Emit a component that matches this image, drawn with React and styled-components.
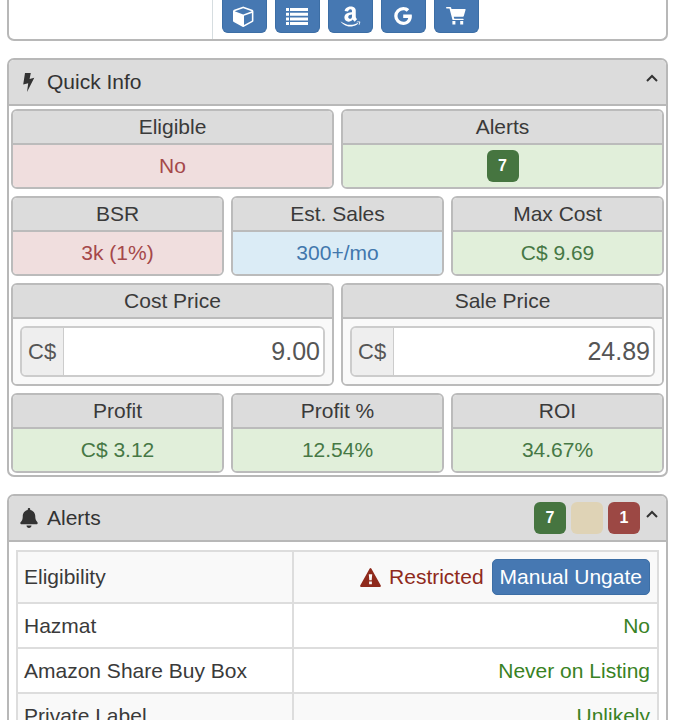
import { useState } from "react";
import styled, { createGlobalStyle, css } from "styled-components";
import { FaAmazon, FaBell } from "react-icons/fa";

const GlobalStyle = createGlobalStyle`
  *,
  *::before,
  *::after {
    box-sizing: border-box;
  }
  body {
    margin: 0;
    background: #fff;
    color: #3a3a3a;
    font-family: "Liberation Sans", Arial, sans-serif;
    font-size: 21px;
    line-height: 24px;
  }
  button,
  input {
    font: inherit;
  }
`;

const tones = {
  danger: { background: "#f0dede", color: "#a5484a" },
  success: { background: "#e1efda", color: "#467845" },
  info: { background: "#dbecf6", color: "#4177ad" },
};

const Page = styled.main`
  display: flex;
  flex-direction: column;
  gap: 17px;
  padding: 0 7px 17px;
`;

const ProductPanel = styled.section`
  display: flex;
  border: 2px solid #b8b8b8;
  border-top: 0;
  border-radius: 0 0 7px 7px;
`;

const ProductThumb = styled.div`
  flex: 0 0 31%;
  border-right: 1px solid #d6dde0;
`;

const ProductLinks = styled.nav`
  display: flex;
  gap: 8px;
  padding: 0 9px 6px;
`;

const IconLink = styled.a`
  display: flex;
  align-items: center;
  justify-content: center;
  width: 45px;
  height: 33px;
  border: 1px solid #3c6ea5;
  border-top: 0;
  border-radius: 0 0 6px 6px;
  background: #4678b2;
  color: #fff;
`;

const Panel = styled.section`
  overflow: hidden;
  border: 2px solid #b8b8b8;
  border-radius: 7px;
`;

const PanelHeader = styled.header`
  display: flex;
  align-items: center;
  height: 46px;
  padding: 0 8px 0 10px;
  border-bottom: 2px solid #b8b8b8;
  background: #dcdcdc;
  color: #333;
`;

const PanelIcon = styled.span`
  display: flex;
  flex: 0 0 28px;
`;

const PanelTitle = styled.h2`
  flex: 1;
  margin: 0;
  font-size: 21px;
  font-weight: 400;
`;

const Toggle = styled.button`
  display: flex;
  margin: 0 0 8px 6px;
  padding: 0;
  border: 0;
  background: none;
  color: #333;
  cursor: pointer;
`;

const Badges = styled.div`
  display: flex;
  gap: 5px;
`;

const Badge = styled.span`
  display: flex;
  align-items: center;
  justify-content: center;
  width: 32px;
  height: 32px;
  border-radius: 6px;
  background: ${({ $color }) => $color};
  color: #fff;
  font-size: 16px;
  font-weight: 700;
`;

const Tiles = styled.div`
  display: grid;
  grid-template-columns: repeat(6, 1fr);
  gap: 7px;
  padding: 3px 2px 2px;
`;

const TileBox = styled.div`
  grid-column: span ${({ $span }) => $span};
  overflow: hidden;
  border: 2px solid #bbb;
  border-radius: 6px;
  text-align: center;
`;

const TileTitle = styled.h3`
  margin: 0;
  padding: 4px 0;
  border-bottom: 2px solid #bbb;
  background: #dcdcdc;
  color: #3a3a3a;
  font-size: 21px;
  font-weight: 400;
`;

const TileBody = styled.div`
  display: flex;
  align-items: center;
  justify-content: center;
  height: 42px;
  ${({ $tone }) => css`
    background: ${tones[$tone].background};
    color: ${tones[$tone].color};
  `}
`;

const PriceBody = styled.div`
  padding: 7px;
  background: #f9f9f9;
`;

const PriceGroup = styled.label`
  display: flex;
  height: 51px;
  overflow: hidden;
  border: 2px solid #ccc;
  border-radius: 6px;
`;

const Currency = styled.span`
  display: flex;
  align-items: center;
  padding: 0 7px 0 6px;
  border-right: 1px solid #ccc;
  background: #eee;
  color: #555;
  font-size: 22px;
`;

const PriceInput = styled.input`
  flex: 1;
  min-width: 0;
  padding: 0 3px;
  border: 0;
  outline: 0;
  background: #fff;
  color: #555;
  font-size: 25px;
  text-align: right;
`;

const TableWrap = styled.div`
  padding: 8px 7px;
`;

const Table = styled.table`
  width: 100%;
  border-collapse: collapse;
`;

const Row = styled.tr`
  background: ${({ $shaded }) => ($shaded ? "#f9f9f9" : "#fff")};
`;

const Label = styled.th`
  width: 43%;
  height: 45px;
  padding: 7px 6px;
  border: 2px solid #ddd;
  font-weight: 400;
  text-align: left;
`;

const Value = styled.td`
  padding: 7px;
  border: 2px solid #ddd;
  color: #398224;
  text-align: right;
`;

const Restricted = styled.div`
  display: flex;
  align-items: center;
  justify-content: flex-end;
  gap: 8px;
  color: #8f2a1c;
`;

const UngateButton = styled.button`
  height: 36px;
  padding: 0 7px;
  border: 1px solid #3c6ea5;
  border-radius: 5px;
  background: #4678b2;
  color: #fff;
  cursor: pointer;
`;

const CubeIcon = () => (
  <svg width="22" height="22" viewBox="0 0 1792 1792" aria-hidden="true">
    <path
      fill="currentColor"
      d="M896 1629l640-349v-636l-640 233v752zm-64-865l698-254-698-254-698 254zm832-252v768q0 35-18 65t-49 47l-704 384q-28 16-61 16t-61-16l-704-384q-31-17-49-47t-18-65v-768q0-40 23-73t61-47l704-256q22-8 44-8t44 8l704 256q38 14 61 47t23 73z"
    />
  </svg>
);

const ListIcon = () => (
  <svg width="22" height="17" viewBox="0 0 22 17" fill="currentColor" aria-hidden="true">
    <path d="M0 0h3v3H0zM4 0h18v3H4zM0 4.7h3v3H0zM4 4.7h18v3H4zM0 9.4h3v3H0zM4 9.4h18v3H4zM0 14h3v3H0zM4 14h18v3H4z" />
  </svg>
);

const GoogleIcon = () => (
  <svg width="18" height="18" viewBox="0 0 18 18" aria-hidden="true">
    <path
      fill="currentColor"
      d="M9.2 7.4h8.5c.1.5.2 1 .2 1.6 0 5.2-3.5 9-8.7 9a9 9 0 1 1 0-18c2.4 0 4.5.9 6 2.3l-2.5 2.4c-.7-.7-1.9-1.4-3.5-1.4a5.7 5.7 0 0 0 0 11.4c3.5 0 4.8-2.5 5-3.8h-5z"
    />
  </svg>
);

const CartIcon = () => (
  <svg width="20" height="18" viewBox="0 0 20 18" fill="currentColor" aria-hidden="true">
    <path d="M.8 0H4.3q.6 0 .8.6L5.5 2H19q.8 0 .6.8L17.8 9q-.2.7-.9.7H7.7l.6 2H17q.7 0 .7.7t-.7.7H7.2q-.6 0-.8-.6L3.5 1.6H.8Q0 1.6 0 .8T.8 0Z" />
    <path d="M6.4 14h3v3.4h-3zM14.2 14h3v3.4h-3z" />
  </svg>
);

const FlashIcon = () => (
  <svg width="18" height="20" viewBox="0 0 18 20" aria-hidden="true">
    <path fill="currentColor" d="M6 1H11.8L10.6 7 15.3 5.8 8 20 9.2 11.3 4.2 12.4Z" />
  </svg>
);

const WarningIcon = () => (
  <svg width="21" height="19" viewBox="0 0 21 19" aria-hidden="true">
    <path
      fill="currentColor"
      fillRule="evenodd"
      d="M11.3.5 20.8 17.5Q21.2 19 19.8 19H1.2Q-.2 19 .2 17.5L9.7.5Q10.5-.4 11.3.5ZM8.8 6.2 9.3 12.2H11.7L12.2 6.2ZM9.1 13.6V16.2H11.9V13.6Z"
    />
  </svg>
);

const ChevronIcon = ({ open }) => (
  <svg width="12" height="8" viewBox="0 0 12 8" aria-hidden="true">
    <path
      d={open ? "M1 7 6 2 11 7" : "M1 1 6 6 11 1"}
      fill="none"
      stroke="currentColor"
      strokeWidth="2"
    />
  </svg>
);

const CollapsiblePanel = ({ icon, title, badges, children }) => {
  const [open, setOpen] = useState(true);

  return (
    <Panel>
      <PanelHeader>
        <PanelIcon>{icon}</PanelIcon>
        <PanelTitle>{title}</PanelTitle>
        {badges}
        <Toggle
          type="button"
          aria-label={`Toggle ${title}`}
          aria-expanded={open}
          onClick={() => setOpen(!open)}
        >
          <ChevronIcon open={open} />
        </Toggle>
      </PanelHeader>
      {open && children}
    </Panel>
  );
};

const Tile = ({ title, tone, span = 2, children }) => (
  <TileBox $span={span}>
    <TileTitle>{title}</TileTitle>
    <TileBody $tone={tone}>{children}</TileBody>
  </TileBox>
);

const PriceTile = ({ title, id, value }) => (
  <TileBox $span={3}>
    <TileTitle>{title}</TileTitle>
    <PriceBody>
      <PriceGroup htmlFor={id}>
        <Currency>C$</Currency>
        <PriceInput id={id} aria-label={title} inputMode="decimal" defaultValue={value} />
      </PriceGroup>
    </PriceBody>
  </TileBox>
);

const App = () => {
  return (
    <>
      <GlobalStyle />
      <Page>
        <ProductPanel>
          <ProductThumb />
          <ProductLinks>
            <IconLink href="#" aria-label="Product">
              <CubeIcon />
            </IconLink>
            <IconLink href="#" aria-label="Offers">
              <ListIcon />
            </IconLink>
            <IconLink href="#" aria-label="Amazon">
              <FaAmazon size={23} />
            </IconLink>
            <IconLink href="#" aria-label="Google">
              <GoogleIcon />
            </IconLink>
            <IconLink href="#" aria-label="Cart">
              <CartIcon />
            </IconLink>
          </ProductLinks>
        </ProductPanel>

        <CollapsiblePanel icon={<FlashIcon />} title="Quick Info">
          <Tiles>
            <Tile title="Eligible" tone="danger" span={3}>
              No
            </Tile>
            <Tile title="Alerts" tone="success" span={3}>
              <Badge $color="#467540">7</Badge>
            </Tile>
            <Tile title="BSR" tone="danger">
              3k (1%)
            </Tile>
            <Tile title="Est. Sales" tone="info">
              300+/mo
            </Tile>
            <Tile title="Max Cost" tone="success">
              C$ 9.69
            </Tile>
            <PriceTile title="Cost Price" id="cost-price" value="9.00" />
            <PriceTile title="Sale Price" id="sale-price" value="24.89" />
            <Tile title="Profit" tone="success">
              C$ 3.12
            </Tile>
            <Tile title="Profit %" tone="success">
              12.54%
            </Tile>
            <Tile title="ROI" tone="success">
              34.67%
            </Tile>
          </Tiles>
        </CollapsiblePanel>

        <CollapsiblePanel
          icon={<FaBell size={20} />}
          title="Alerts"
          badges={
            <Badges>
              <Badge $color="#467540">7</Badge>
              <Badge $color="#dfd3b6" />
              <Badge $color="#9c4844">1</Badge>
            </Badges>
          }
        >
          <TableWrap>
            <Table>
              <tbody>
                <Row $shaded>
                  <Label scope="row">Eligibility</Label>
                  <Value>
                    <Restricted>
                      <WarningIcon />
                      <span>Restricted</span>
                      <UngateButton type="button">Manual Ungate</UngateButton>
                    </Restricted>
                  </Value>
                </Row>
                <Row>
                  <Label scope="row">Hazmat</Label>
                  <Value>No</Value>
                </Row>
                <Row>
                  <Label scope="row">Amazon Share Buy Box</Label>
                  <Value>Never on Listing</Value>
                </Row>
                <Row $shaded>
                  <Label scope="row">Private Label</Label>
                  <Value>Unlikely</Value>
                </Row>
              </tbody>
            </Table>
          </TableWrap>
        </CollapsiblePanel>
      </Page>
    </>
  );
};

export default App;
